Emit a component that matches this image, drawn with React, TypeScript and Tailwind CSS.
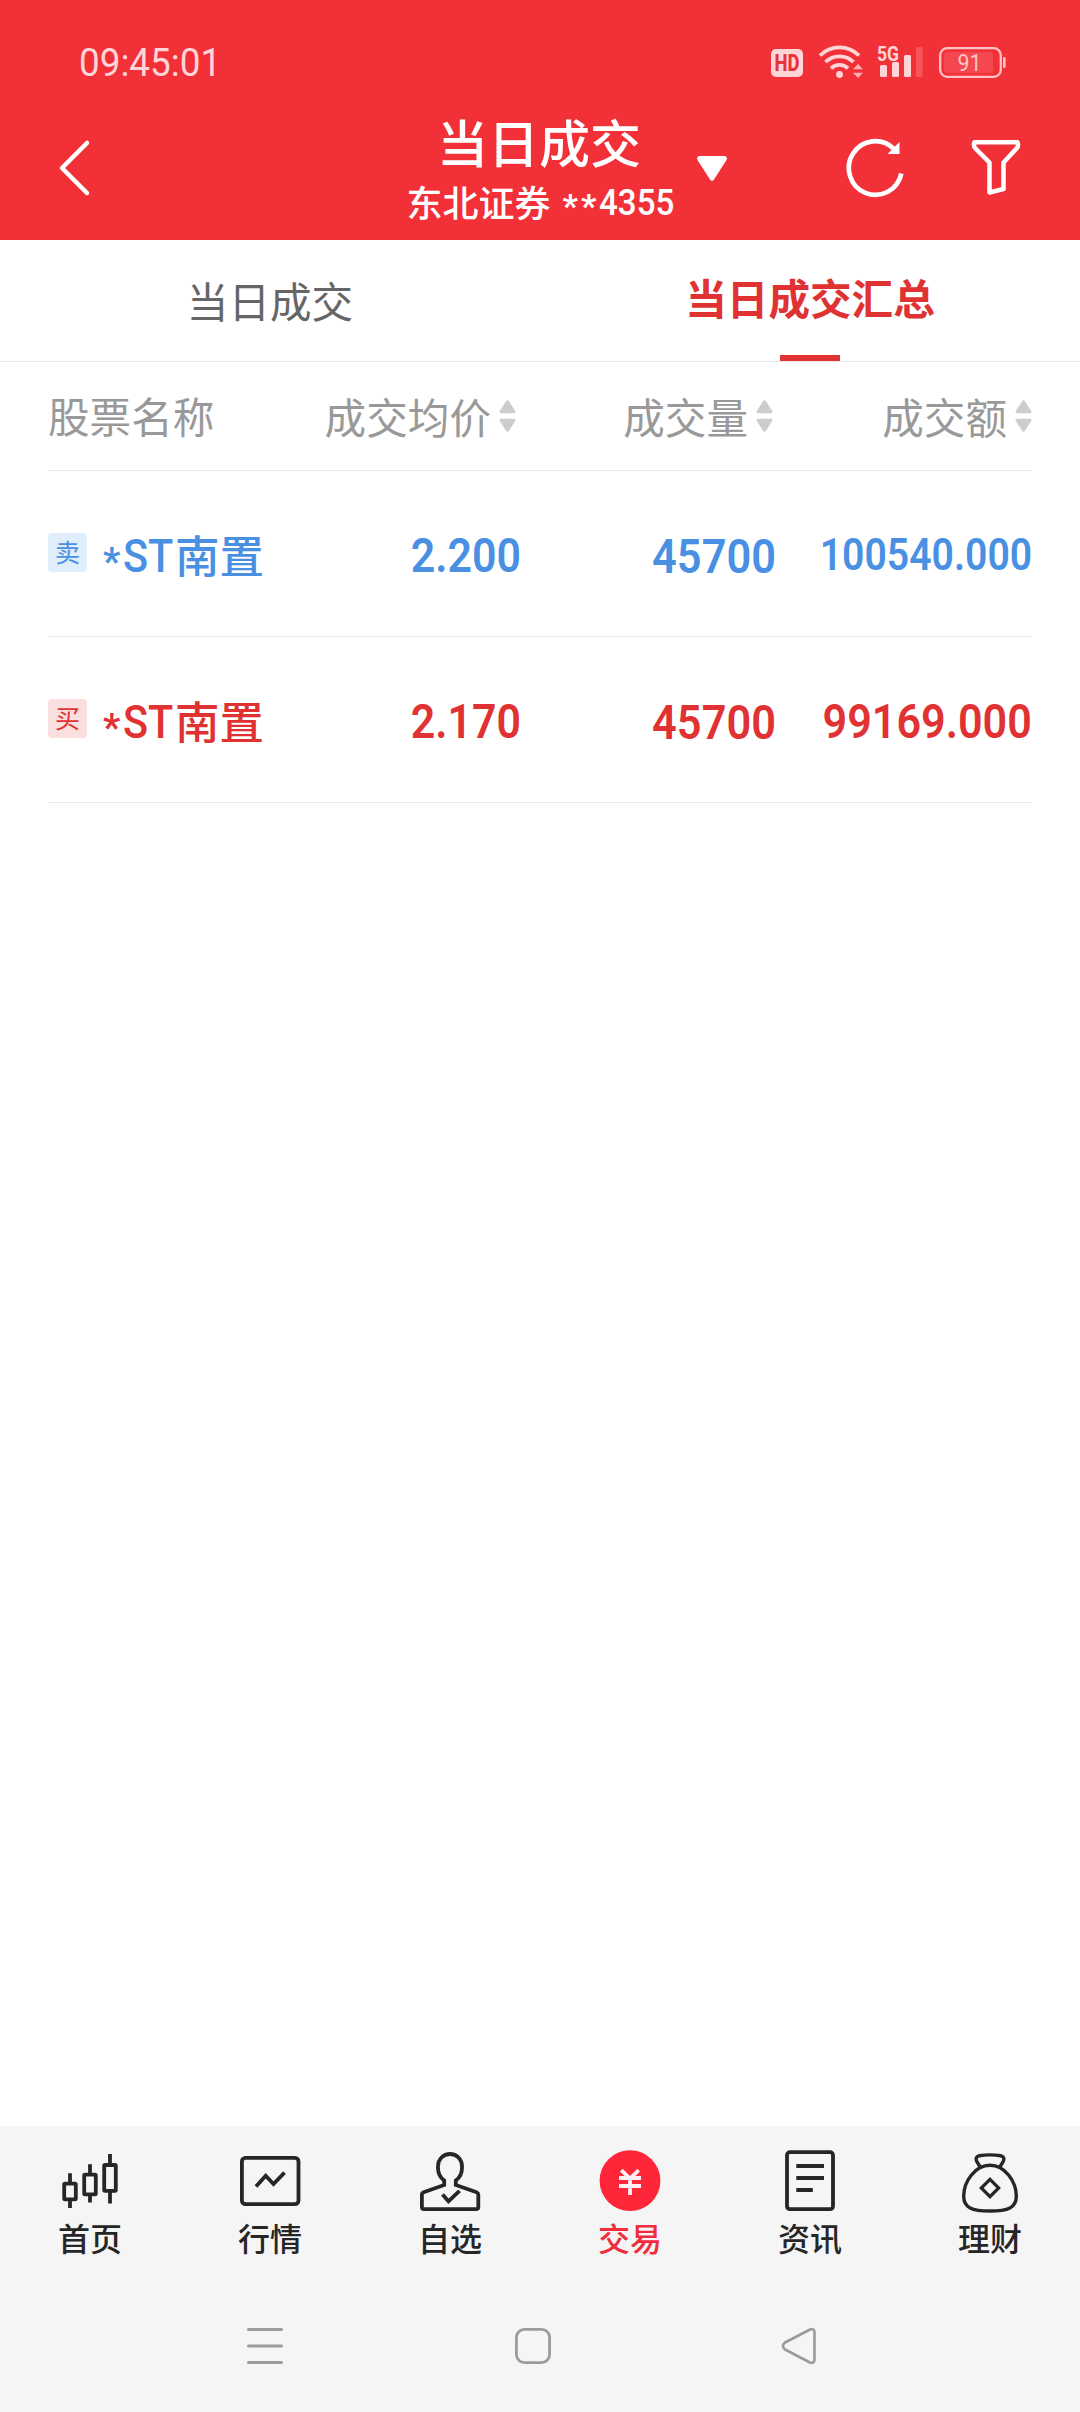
import type { ReactNode } from "react";
import clsx from "clsx";

type Side = "sell" | "buy";

interface Deal {
  side: Side;
  name: string;
  price: string;
  volume: string;
  amount: string;
}

const deals: Deal[] = [
  { side: "sell", name: "南置", price: "2.200", volume: "45700", amount: "100540.000" },
  { side: "buy", name: "南置", price: "2.170", volume: "45700", amount: "99169.000" },
];

function StatusBar() {
  return (
    <div className="flex h-[96px] items-start justify-between pl-[79px] pr-[74px] text-[#ffd5d7]">
      <span className="mt-[38px] origin-left scale-x-[0.97] font-['Roboto'] text-[38px] leading-[50px]">09:45:01</span>
      <div className="flex pt-[42px]">
        <svg width="236" height="40" viewBox="770 42 236 40" fill="none" aria-label="status">
          <rect x="771" y="49" width="32" height="28" rx="5" fill="#ffd5d7" />
          <text x="787" y="71" textAnchor="middle" textLength="25" lengthAdjust="spacingAndGlyphs" fontSize="23" fontWeight="800" fill="#e8333a" className="font-['Roboto']">
            HD
          </text>

          {/* wifi */}
          <g stroke="#ffd5d7" strokeWidth="3.8">
            <path d="M820 55.5a27.5 27.5 0 0 1 39 0" />
            <path d="M825.5 62a20 20 0 0 1 28 0" />
            <path d="M831 68.3a12.5 12.5 0 0 1 17 0" />
          </g>
          <circle cx="839.5" cy="74.5" r="3.4" fill="#ffd5d7" />
          <path d="M858 64l5 5.2h-10zM858 78l5-5.2h-10z" fill="#ffb3b7" />

          {/* signal */}
          <text x="877" y="60.5" textLength="22" lengthAdjust="spacingAndGlyphs" fontSize="21" fontWeight="700" fill="#ffd5d7" className="font-['Roboto']">
            5G
          </text>
          <g fill="#ffd5d7">
            <rect x="880" y="65" width="7" height="12" rx="1.5" />
            <rect x="892" y="62" width="7" height="15" rx="1.5" />
            <rect x="904" y="55" width="7" height="22" rx="1.5" />
          </g>
          <rect x="916" y="47" width="6.5" height="30" rx="1.5" fill="#f7545b" />

          {/* battery */}
          <rect x="940.2" y="48.2" width="60.6" height="28.6" rx="7" stroke="#ffc3c6" strokeWidth="2.3" />
          <rect x="944" y="52" width="49" height="21" rx="3" fill="#f5474e" />
          <rect x="1003" y="57" width="2.6" height="11" rx="1.2" fill="#ffc3c6" />
          <text x="969.5" y="71" textAnchor="middle" fontSize="24" textLength="24" lengthAdjust="spacingAndGlyphs" fill="#ffc3c6" className="font-['Roboto']">
            91
          </text>
        </svg>
      </div>
    </div>
  );
}

function TitleBar() {
  return (
    <div className="grid h-[144px] grid-cols-[340px_400px_340px] text-white">
      <button className="flex h-[144px] items-center pl-[57px]" aria-label="back">
        <svg width="36" height="60" viewBox="0 0 36 60" fill="none" stroke="currentColor" strokeWidth="4.5" strokeLinecap="round" strokeLinejoin="round">
          <path d="M30 5L5 30l25 25" />
        </svg>
      </button>

      <div className="relative flex flex-col items-center">
        <h1 className="mr-[2px] mt-[15px] text-[51px] font-medium leading-[60px]">当日成交</h1>
        <p className="mt-[5px] flex h-[50px] items-center whitespace-nowrap text-[36px] font-medium leading-[48px]">
          东北证券
          <span className="ml-[12px] flex w-[111px] pt-[3px] font-['Roboto'] text-[36px]">
            <span className="translate-y-[3px] text-[34px] font-bold tracking-[3px]">**</span>
            <span className="origin-left scale-x-[0.92]">4355</span>
          </span>
        </p>
        <svg className="absolute left-[357px] top-[60px]" width="30" height="25" viewBox="0 0 30 25" fill="currentColor">
          <path d="M2 0h26q3 1 1.5 4L17 23.5q-2 2.5-4 0L.5 4Q-1 1 2 0z" />
        </svg>
      </div>

      <div className="flex items-center justify-end gap-[64px] pr-[59px]">
        <svg className="mt-[-2px]" width="62" height="64" viewBox="0 0 62 64" fill="none" stroke="currentColor" strokeWidth="4.7">
          <path d="M56.3 38.5A26.5 26.8 0 1 1 48.5 13.5" />
          <path d="M54.5 7v12H42.5z" fill="currentColor" stroke="none" />
        </svg>
        <svg className="mt-[-2px]" width="50" height="60" viewBox="0 0 50 60" fill="none" stroke="currentColor" strokeWidth="4.5" strokeLinejoin="round">
          <path d="M3.5 5.2h43q1.5 4-1 6.3L32.5 25.5v26.5l-14 3.5V25.5L4.5 11.5Q2 9 3.5 5.2z" />
        </svg>
      </div>
    </div>
  );
}

function Tabs() {
  return (
    <nav className="grid h-[122px] grid-cols-2 border-b border-[#ececec] text-center text-[41.6px]">
      <button className="flex items-start justify-center pt-[30px] leading-[60px] text-[#666666]">当日成交</button>
      <button className="flex flex-col items-center justify-between pt-[27px] font-bold leading-[60px] text-[#e03232]">
        当日成交汇总
        <span className="h-[6px] w-[60px] bg-[#e03232]" />
      </button>
    </nav>
  );
}

function SortIcon() {
  return (
    <svg className="mt-[-1px]" width="17" height="32" viewBox="0 0 17 32" fill="#cccccc">
      <path d="M7.2 1q1.3-1.5 2.6 0l6.4 10q.8 2-1 2.2H1.8Q0 13 .8 11zM7.2 31q1.3 1.5 2.6 0l6.4-10q.8-2-1-2.2H1.8Q0 19 .8 21z" />
    </svg>
  );
}

function HeadCell({ children }: { children: ReactNode }) {
  return (
    <div className="flex items-center justify-end gap-[8px]">
      <span>{children}</span>
      <SortIcon />
    </div>
  );
}

// condensed figures, anchored to the right edge of the cell
function Figure({ value, className }: { value: string; className: string }) {
  return (
    <div className="flex justify-end">
      <span className={clsx("origin-right whitespace-nowrap font-['Roboto'] font-semibold leading-[60px]", className)}>{value}</span>
    </div>
  );
}

function DealRow({ deal }: { deal: Deal }) {
  const sell = deal.side === "sell";
  return (
    <div
      className={clsx(
        "grid h-[166px] grid-cols-[250px_224px_254px_256px] border-b border-[#ececec] pt-[54px]",
        sell ? "text-[#4a90e2]" : "text-[#e03232]",
      )}
    >
      <div className="flex items-start">
        <span
          className={clsx(
            "mt-[8px] flex h-[39px] w-[39px] items-center justify-center rounded-[4px] pb-[2px] text-[25px] leading-none",
            sell ? "bg-[#e0edfb]" : "bg-[#fadfdf]",
          )}
        >
          {sell ? "卖" : "买"}
        </span>
        <span className="ml-[16px] flex whitespace-nowrap font-medium leading-[60px]">
          <span className="w-[20px] translate-y-[7px] font-['Roboto'] text-[38px] font-bold">*</span>
          <span className="mt-px w-[52px] origin-left scale-x-[0.9] font-['Roboto'] text-[46px]">ST</span>
          <span className="mt-[-1px] text-[44.5px]">{deal.name}</span>
        </span>
      </div>
      <Figure value={deal.price} className="mr-px mt-px scale-x-[0.875] text-[49px]" />
      <Figure value={deal.volume} className="mt-[2px] scale-x-[0.885] text-[49px]" />
      <Figure
        value={deal.amount}
        className={deal.amount.length > 9 ? "scale-x-[0.87] text-[45px]" : "mt-px scale-x-[0.88] text-[49px]"}
      />
    </div>
  );
}

function TabIcon({ children }: { children: ReactNode }) {
  return (
    <svg width="64" height="66" viewBox="0 0 64 66" fill="none" stroke="#262626" strokeWidth="3.8">
      {children}
    </svg>
  );
}

const tabs = [
  {
    label: "首页",
    icon: (
      <TabIcon>
        <rect x="6.2" y="35.6" width="11.6" height="15.8" rx="0.8" />
        <rect x="26.2" y="26.6" width="11.6" height="19.8" rx="0.8" />
        <rect x="46.2" y="17" width="11.6" height="25.8" rx="0.8" />
        <path d="M12 25.3v9M12 52.5V60M32 16.3v9M32 47.5v7M52 6v10M52 44v11.5" />
      </TabIcon>
    ),
  },
  {
    label: "行情",
    icon: (
      <TabIcon>
        <rect x="3.9" y="9.9" width="56.6" height="46.2" rx="3.5" />
        <path d="M18 38.5l9.7-10.8 7.8 8.3L46.5 24.7" />
      </TabIcon>
    ),
  },
  {
    label: "自选",
    icon: (
      <TabIcon>
        <path d="M26.2 37v-4.5C22 29.5 20 25.5 20 20v-2a12 12 0 0 1 24 0v2c0 5.5-2 9.5-6.2 12.500V37L58.5 44.2q1.8.8 1.8 2.5V59q0 2.2-2.2 2.2H6Q3.9 61.2 3.9 59V46.7q0-1.7 1.8-2.5z" />
        <path d="M24.5 46.5l6 6.8 11-10.5" />
      </TabIcon>
    ),
  },
  {
    label: "交易",
    active: true,
    icon: (
      <TabIcon>
        <circle cx="32" cy="32.7" r="30.4" fill="#fe2638" stroke="none" />
        <path d="M23.3 22.2l8.7 8.3 8.7-8.3M21 30h22M21 38h22M32 30v17" stroke="#fff0f1" />
      </TabIcon>
    ),
  },
  {
    label: "资讯",
    icon: (
      <TabIcon>
        <rect x="9" y="4.2" width="46" height="57" rx="3" />
        <path d="M18.3 18H46M18.3 30H46M18.3 42h16.5" />
      </TabIcon>
    ),
  },
  {
    label: "理财",
    icon: (
      <TabIcon>
        <path d="M32 17.3c15 0 26.3 16.2 26.3 31 0 11.5-8.3 14.7-26.3 14.7S5.7 59.800 5.7 48.300c0-14.8 11.3-31 26.3-31z" strokeWidth="3.4" />
        <path d="M22.5 19.5l-4-6.5q-1.5-4 2.5-5.2 11-1.8 22 0 4 1.2 2.5 5.2l-4 6.5" strokeWidth="3.4" />
        <path d="M32 31.3l8.7 8.7-8.7 8.7-8.7-8.7z" strokeWidth="3.2" />
      </TabIcon>
    ),
  },
];

function BottomBar() {
  return (
    <footer className="h-[286px] bg-[#f5f5f5]">
      <div className="grid h-[162px] grid-cols-6 pt-[22px]">
        {tabs.map((tab) => (
          <button key={tab.label} className="flex flex-col items-center">
            {tab.icon}
            <span className={clsx("mt-[3px] text-[32px] font-medium leading-[40px]", tab.active ? "text-[#f12c3c]" : "text-[#262626]")}>
              {tab.label}
            </span>
          </button>
        ))}
      </div>
      {/* system navigation */}
      <div className="flex justify-between pl-[247px] pr-[263px] pt-[39px]">
        <svg width="36" height="38" viewBox="0 0 36 38" stroke="#9b9b9b" strokeWidth="3" strokeLinecap="round">
          <path d="M1.5 2.5h33M1.5 19h33M1.5 35.5h33" />
        </svg>
        <svg className="ml-[2px]" width="38" height="38" viewBox="0 0 38 38" fill="none" stroke="#9b9b9b" strokeWidth="2.8">
          <rect x="2.4" y="2.4" width="33.2" height="33.2" rx="8" />
        </svg>
        <svg width="36" height="38" viewBox="0 0 36 38" fill="none" stroke="#9b9b9b" strokeWidth="2.6" strokeLinejoin="round">
          <path d="M29 2.5q4-1.5 4.5 2.5v28q-.5 4-4.5 2.5L4 22.5q-4-3.5 0-7z" />
        </svg>
      </div>
    </footer>
  );
}

export default function App() {
  return (
    <div className="flex h-[2412px] w-[1080px] flex-col bg-white font-['Noto_Sans_CJK_SC',sans-serif]">
      <header className="h-[240px] bg-[#f23038]">
        <StatusBar />
        <TitleBar />
      </header>
      <Tabs />
      <main className="flex-1 px-[48px]">
        <div className="grid h-[109px] grid-cols-[250px_218px_257px_259px] border-b border-[#ececec] text-[41.6px] leading-[106px] text-[#999999]">
          <span>股票名称</span>
          <HeadCell>成交均价</HeadCell>
          <HeadCell>成交量</HeadCell>
          <HeadCell>成交额</HeadCell>
        </div>
        {deals.map((deal) => (
          <DealRow key={deal.side} deal={deal} />
        ))}
      </main>
      <BottomBar />
    </div>
  );
}
